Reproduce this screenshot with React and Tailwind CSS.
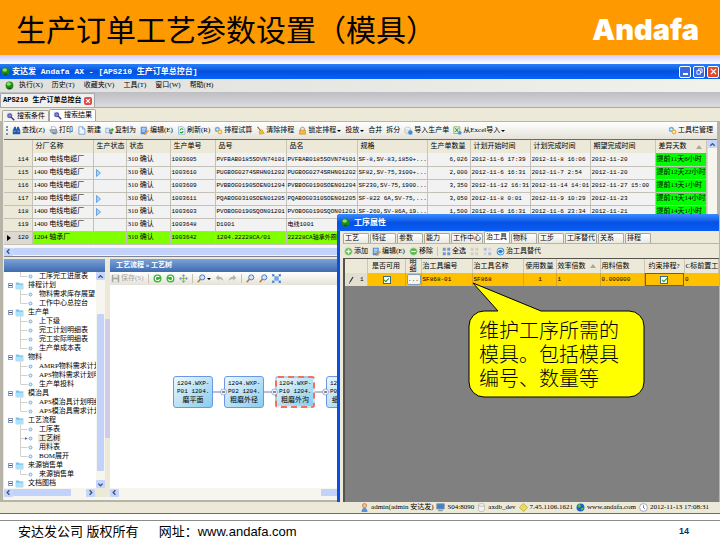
import React, { useState } from "react";

const orders = [
  { no: 114, plant: "1400 电线电缆厂", flag: false, order: "1003605", item: "PVFBAB0185SOVN74101", name: "PVFBAB0185SOVN74101", spec: "SF-8,SV-83,1850+...", qty: "6,026", start: "2012-11-6 17:39", end: "2012-11-8 16:06", expect: "2012-11-20", diff: "提前11天8小时" },
  { no: 115, plant: "1400 电线电缆厂", flag: true, order: "1003610", item: "PUGBOG0274SRHN01202", name: "PUGBOG0274SRHN01202", spec: "SF82,SV-75,3100+...", qty: "2,000", start: "2012-11-6 16:31", end: "2012-11-7 2:54", expect: "2012-11-20", diff: "提前12天22小时" },
  { no: 116, plant: "1400 电线电缆厂", flag: false, order: "1003609", item: "PVBBOG0190SOEN01204", name: "PVBBOG0190SOEN01204", spec: "SF230,SV-75,1900...", qty: "3,350", start: "2012-11-12 16:31", end: "2012-11-14 14:01", expect: "2012-11-27 15:00", diff: "提前13天1小时" },
  { no: 117, plant: "1400 电线电缆厂", flag: true, order: "1003611", item: "PQABOG0310SOEN01205", name: "PQABOG0310SOEN01205", spec: "SF-822 6A,SV-75,...", qty: "3,050", start: "2012-11-8 0:01", end: "2012-11-9 10:29", expect: "2012-11-23", diff: "提前13天14小时" },
  { no: 118, plant: "1400 电线电缆厂", flag: true, order: "1003603", item: "PVOBOG0190SQON01201", name: "PVOBOG0190SQON01201", spec: "SF-260,SV-86A,19...", qty: "1,500", start: "2012-11-6 16:31", end: "2012-11-6 23:34", expect: "2012-11-21", diff: "提前14天1小时" },
  { no: 119, plant: "1400 电线电缆厂", flag: false, order: "1003648", item: "D1001", name: "电线1001" },
  { no: 120, plant: "1204 轴承厂", flag: false, order: "1003642", item: "1204.22228CA/01", name: "22228CA轴承外圈", current: true },
];

const tree = [
  { label: "工序完工进度表", last: true },
  { label: "排程计划", folder: true },
  { label: "物料需求库存展望" },
  { label: "工作中心总控台", last: true },
  { label: "生产单", folder: true },
  { label: "上下级" },
  { label: "完工计划明细表" },
  { label: "完工实际明细表" },
  { label: "生产单成本表", last: true },
  { label: "物料", folder: true },
  { label: "AMRP物料需求计划明" },
  { label: "APS物料需求计划明" },
  { label: "生产单投料", last: true },
  { label: "模治具", folder: true },
  { label: "APS模治具计划明细" },
  { label: "APS模治具需求计划", last: true },
  { label: "工艺流程", folder: true },
  { label: "工序表" },
  { label: "工艺树", selected: true },
  { label: "用料表" },
  { label: "BOM展开", last: true },
  { label: "来源销售单", folder: true },
  { label: "来源销售单", last: true },
  { label: "文档图档", folder: true },
];

const steps = [
  { code: "1204.WXP-", op: "P01 1204.", name: "磨平面" },
  { code: "1204.WXP-", op: "P02 1204.", name: "粗磨外径" },
  { code: "1204.WXP-", op: "P10 1204.", name: "粗磨外沟", active: true },
  { code: "1204.WXP-", op: "P09 1204.", name: "细磨外径" },
];

const iconShapes = {
  ball: (
    <>
      <circle cx="6" cy="6" r="5.2" fill="#1f8a1f" />
      <ellipse cx="5" cy="4" rx="3" ry="2.2" fill="#8be05a" />
      <path d="M3 9h6l-1 2H4z" fill="#0b5a1a" />
    </>
  ),
  find: (
    <>
      <path d="M3 1h2l1 4v6H1V6zM7 1h2l2 5v5H6V5z" fill="#2458a8" />
      <path d="M2 7h3M7 7h3" stroke="#9cc4f4" />
    </>
  ),
  print: (
    <>
      <path d="M3 1h5l2 4H4z" fill="#fff" stroke="#7a8ba5" strokeWidth=".7" />
      <path d="M1 5h9l1 4H3z" fill="#a9b6c8" stroke="#5c6b82" strokeWidth=".7" />
      <path d="M4 9h6v2H5z" fill="#4a90d9" />
    </>
  ),
  page: <path d="M2.500 1h5l3 3v7h-8zM7.500 1v3h3" fill="#eef6ff" stroke="#6a93c9" />,
  copy: (
    <>
      <path d="M1 3h5v6H1z" fill="#dcebfa" stroke="#6a93c9" strokeWidth=".8" />
      <path d="M5 8c0-3 2-4 4-4V2l3 3-3 3V6c-2 0-3 1-4 2z" fill="#2fa52f" />
      <circle cx="8" cy="9" r="2" fill="#8658b8" />
    </>
  ),
  edit: (
    <>
      <path d="M1 1h8v10H1z" fill="#4f8fe0" />
      <path d="M2.500 3h5M2.500 5h5M2.500 7h4" stroke="#fff" />
      <path d="M11 5l-5 5-1 2 2-.5 5-5z" fill="#f49a2a" />
    </>
  ),
  refresh: (
    <>
      <path d="M2 1h6l2.500 2.500V11H2z" fill="#f3fbff" stroke="#6aa0d0" strokeWidth=".8" />
      <path d="M4 6c0-3 4-3 4-1M8 6.500c0 3-4 3-4 1" fill="none" stroke="#22a022" strokeWidth="1.500" />
    </>
  ),
  gears: (
    <>
      <circle cx="4.500" cy="4.500" r="3.500" fill="#6db3ea" />
      <circle cx="4.500" cy="4.500" r="1.300" fill="#fff" />
      <circle cx="8" cy="8" r="3.200" fill="#f0b04a" />
      <circle cx="8" cy="8" r="1.200" fill="#fff" />
    </>
  ),
  broom: (
    <>
      <path d="M2 1l4 5" stroke="#8a5a20" strokeWidth="1.500" />
      <path d="M4 7l4-2 3 5-6 1z" fill="#f6c233" stroke="#b07d12" strokeWidth=".6" />
    </>
  ),
  lock: (
    <>
      <path d="M3.500 6V4a2.500 2.500 0 0 1 5 0v2" fill="none" stroke="#9a9a9a" strokeWidth="1.300" />
      <path d="M2 5.500h8V11H2z" fill="#f7b63c" stroke="#b5791a" strokeWidth=".6" />
    </>
  ),
  disk: (
    <>
      <ellipse cx="5" cy="4" rx="4" ry="2.500" fill="#f4f4f4" stroke="#a0a0a0" strokeWidth=".6" />
      <path d="M1 4v4c0 3 8 3 8 0V4" fill="#dfe3e8" stroke="#a0a0a0" strokeWidth=".6" />
      <circle cx="8.500" cy="8.500" r="3" fill="#3c8fdc" />
    </>
  ),
  excel: (
    <>
      <path d="M1 1h8v9H1z" fill="#dff0d4" stroke="#5b9a4a" strokeWidth=".8" />
      <path d="M3 3l4 5M7 3L3 8" stroke="#2c8a2c" strokeWidth="1.300" />
      <circle cx="9" cy="9" r="2.500" fill="#4b94da" />
    </>
  ),
  search: (
    <>
      <path d="M1 1h7v7H1z" fill="#c9d6ef" />
      <circle cx="5" cy="5" r="2.700" fill="#8d7fe0" stroke="#3b3585" />
      <path d="M7 7l4 4" stroke="#3b3585" strokeWidth="1.800" />
    </>
  ),
  add: (
    <>
      <circle cx="6" cy="6" r="5" fill="#58b548" stroke="#bfe3b4" />
      <path d="M6 3v6M3 6h6" stroke="#fff" strokeWidth="1.700" />
    </>
  ),
  remove: (
    <>
      <circle cx="6" cy="6" r="5" fill="#58b548" stroke="#bfe3b4" />
      <path d="M3 6h6" stroke="#fff" strokeWidth="1.700" />
    </>
  ),
  squares: <path d="M1 1h4v4H1zM7 1h4v4H7zM1 7h4v4H1zM7 7h4v4H7z" fill="#7397cf" />,
  squaresOff: <path d="M1 1h4v4H1zM7 1h4v4H7zM1 7h4v4H1zM7 7h4v4H7z" fill="#d2cfc5" />,
  invert: (
    <>
      <path d="M1 1h4v4H1zM7 7h4v4H7z" fill="#aebddb" />
      <path d="M7 1h4v4H7zM1 7h4v4H1z" fill="#d8d8d2" />
    </>
  ),
  swap: (
    <>
      <circle cx="6" cy="6" r="5" fill="#2b7fd0" />
      <path d="M2 6c1-4 6-4 7-1M10 6c-1 4-6 4-7 1" fill="none" stroke="#d9f0ff" strokeWidth="1.500" />
    </>
  ),
  save: (
    <>
      <path d="M1 1h10v10H1z" fill="#a6a6a0" />
      <path d="M3 1h6v4H3zM3 7h6v4H3z" fill="#e8e8e2" />
    </>
  ),
  turnLeft: (
    <>
      <circle cx="6" cy="6" r="5.300" fill="#36b336" />
      <path d="M8.500 4A3 3 0 1 0 9 7" fill="none" stroke="#fff" strokeWidth="1.500" />
    </>
  ),
  turnRight: (
    <>
      <circle cx="6" cy="6" r="5.300" fill="#36b336" />
      <path d="M3.500 4A3 3 0 1 1 3 7" fill="none" stroke="#fff" strokeWidth="1.500" />
    </>
  ),
  move: (
    <>
      <path d="M6 0l2.500 3h-5zM6 12l2.500-3h-5zM0 6l3-2.500v5zM12 6L9 3.500v5z" fill="#7d97cf" />
      <path d="M6 3v6M3 6h6" stroke="#8fbf3f" strokeWidth="1.500" />
    </>
  ),
  zoomer: (
    <>
      <circle cx="7" cy="4.500" r="3.400" fill="#cfe6fb" stroke="#3d73bd" strokeWidth="1.200" />
      <path d="M4.500 7L1 11" stroke="#c8741c" strokeWidth="2" />
    </>
  ),
  undo: <path d="M1 5l4-4v2.500c4 0 6 2 6 6-1-2-3-3-6-3V9z" fill="#b4b4ae" />,
  redo: <path d="M11 5L7 1v2.500c-4 0-6 2-6 6 1-2 3-3 6-3V9z" fill="#b4b4ae" />,
  fit: (
    <>
      <path d="M3 3h6v6H3z" fill="#6ea6e6" />
      <path d="M0 0l4 1-3 3zM12 0L8 1l3 3zM0 12l4-1-3-3zM12 12l-4-1 3-3z" fill="#2f6cc0" />
    </>
  ),
  user: (
    <>
      <circle cx="6" cy="3.500" r="2.800" fill="#f3c08c" stroke="#a4642c" strokeWidth=".8" />
      <path d="M2 12c0-7 8-7 8 0z" fill="#5a8fdc" />
    </>
  ),
  monitor: (
    <>
      <path d="M1 1h10v7H1z" fill="#3f83cc" stroke="#8d8d8d" />
      <path d="M3 9h6v2H3z" fill="#8d9bb0" />
    </>
  ),
  db: <path d="M2 3c0-3 8-3 8 0v6c0 3-8 3-8 0zM2 3c0 2 8 2 8 0" fill="#f2f2f2" stroke="#a5a5a5" strokeWidth=".8" />,
  tag: <path d="M6 .5L11.500 6 6 11.500.5 6z" fill="#e9dc5a" stroke="#a89a20" strokeWidth=".8" />,
  globe: (
    <>
      <circle cx="6" cy="6" r="5.300" fill="#1d62c0" />
      <path d="M3 2c3-1 4 1 3 3S3 6 2 5zM7 7l3-1c1 2-1 4-3 4z" fill="#4fc04a" />
    </>
  ),
  clock: (
    <>
      <circle cx="6" cy="6" r="5.200" fill="#fff" stroke="#8793a8" />
      <path d="M6 3v3.500l2 1" fill="none" stroke="#4b5f86" />
    </>
  ),
  folder: (
    <>
      <path d="M1 2h4l1 1h5v8H1z" fill="#7cc3ea" />
      <path d="M1 5h10v6H1z" fill="#aee0f7" />
      <path d="M6 1h4v2H6z" fill="#fff" />
    </>
  ),
};

const Icon = ({ name }) => (
  <svg viewBox="0 0 12 12" className="h-[9px] w-[9px] shrink-0" aria-hidden="true">
    {iconShapes[name]}
  </svg>
);

const Caret = () => (
  <svg viewBox="0 0 4 4" className="h-[4px] w-[4px] shrink-0" aria-hidden="true">
    <path d="M0 1h4L2 3z" fill="#000" />
  </svg>
);

const ToolButton = ({ icon, label, caret, muted }) => (
  <button
    aria-label={label || icon}
    className={`flex shrink-0 items-center gap-px whitespace-nowrap ${muted ? "text-[#a5a297]" : ""}`}
  >
    {icon && <Icon name={icon} />}
    {label}
    {caret && <Caret />}
  </button>
);

// Square arrow button at the end of a scroll bar
const ScrollArrow = ({ d }) => (
  <button aria-label="滚动" className="flex h-[8px] w-[9px] shrink-0 items-center justify-center rounded-[1px] bg-[#c6d5fb]">
    <svg viewBox="0 0 8 8" className="h-[7px] w-[7px]">
      <path d={d} fill="none" stroke="#3c5587" strokeWidth="1.600" />
    </svg>
  </button>
);

const arrows = {
  up: "M1.500 5.500L4 3l2.500 2.500",
  down: "M1.500 3L4 5.500 6.500 3",
  left: "M5 1.500L2.500 4 5 6.500",
  right: "M3 1.500L5.500 4 3 6.500",
};

const code = "font-['Liberation_Mono','Noto_Sans_CJK_SC',monospace] text-[6px]";

const GridTick = ({ label }) => (
  <input
    type="checkbox"
    defaultChecked
    aria-label={label}
    className="flex h-[8px] w-[8px] appearance-none items-center justify-center border border-[#3c6a94] bg-white checked:after:mb-px checked:after:block checked:after:h-[5px] checked:after:w-[3px] checked:after:rotate-45 checked:after:border-r checked:after:border-b checked:after:border-[#179a17] checked:after:content-['']"
  />
);

const OrderToolbar = () => (
  <div className="flex h-[18px] shrink-0 items-center gap-[4px] border-t border-[#b8b5a8] bg-gradient-to-b from-white to-[#e4e2d8] pl-[2px] pr-[4px]">
    <span className="h-[9px] border-l-2 border-dotted border-[#7d8fb5]" />
    <ToolButton icon="find" label="查找(Z)" />
    <ToolButton icon="print" label="打印" />
    <ToolButton icon="page" label="新建" />
    <ToolButton icon="copy" label="复制为" />
    <ToolButton icon="edit" label="编辑(E)" />
    <ToolButton icon="refresh" label="刷新(R)" />
    <ToolButton icon="gears" label="排程试算" />
    <ToolButton icon="broom" label="清除排程" />
    <ToolButton icon="lock" label="锁定排程" caret />
    <ToolButton label="投放" caret />
    <ToolButton label="合并" />
    <ToolButton label="拆分" />
    <ToolButton icon="disk" label="导入生产单" />
    <ToolButton icon="excel" label="从Excel导入" caret />
    <div className="ml-auto">
      <ToolButton icon="gears" label="工具栏管理" />
    </div>
  </div>
);

const OrderGrid = () => {
  const th = "border-r border-[#c9c6b6] pl-[3px] text-left font-normal";
  const td = "border-r border-b border-[#c4c2b8] pl-px";

  return (
    <div className="flex h-[117px] shrink-0 flex-col border-t border-[#6e6c66] bg-[#f7f7f3]">
      <div className="flex min-h-0 flex-1">
        <div className="min-w-0 flex-1 overflow-hidden">
          <table className="w-full table-fixed border-collapse whitespace-nowrap">
            <colgroup>
              <col className="w-[28px]" />
              <col className="w-[61px]" />
              <col className="w-[33px]" />
              <col className="w-[44px]" />
              <col className="w-[45px]" />
              <col className="w-[71px]" />
              <col className="w-[71px]" />
              <col className="w-[70px]" />
              <col className="w-[43px]" />
              <col className="w-[60px]" />
              <col className="w-[60px]" />
              <col className="w-[65px]" />
              <col />
            </colgroup>
            <thead>
              <tr className="h-[13px] bg-[#ece9d8]">
                <th className={th} aria-label="行号" />
                <th className={th}>分厂名称</th>
                <th className={th}>生产状态</th>
                <th className={th}>状态</th>
                <th className={th}>生产单号</th>
                <th className={th}>品号</th>
                <th className={th}>品名</th>
                <th className={th}>规格</th>
                <th className={th}>生产单数量</th>
                <th className={th}>计划开始时间</th>
                <th className={th}>计划完成时间</th>
                <th className={th}>期望完成时间</th>
                <th className={th}>
                  <div className="flex items-center justify-between pr-[4px]">
                    差异天数
                    <svg viewBox="0 0 6 4" className="h-[4px] w-[6px]">
                      <path d="M0 4h6L3 0z" fill="#aca899" />
                    </svg>
                  </div>
                </th>
              </tr>
            </thead>
            <tbody>
              {orders.map((row) => (
                <tr key={row.no} className={`h-[13px] ${row.current ? "bg-[#80ff00]" : "bg-[#f2f2f2]"}`}>
                  <td className={`border-r border-b border-[#c4c2b8] pr-[3px] ${row.current ? "bg-[#dcdad0]" : "bg-[#ece9d8]"}`}>
                    <div className={`flex items-center justify-between pl-[3px] ${code}`}>
                      <svg viewBox="0 0 4 6" className="h-[6px] w-[4px]">
                        {row.current && <path d="M0 0l4 3-4 3z" fill="#000" />}
                      </svg>
                      {row.no}
                    </div>
                  </td>
                  <td className={td}>{row.plant}</td>
                  <td className={td}>
                    {row.flag && (
                      <svg viewBox="0 0 5 8" className="ml-px h-[8px] w-[5px]">
                        <path d="M.5.5L4.500 4 .5 7.500z" fill="#a8d4f8" stroke="#4c94dc" strokeWidth=".8" />
                      </svg>
                    )}
                  </td>
                  <td className={td}>310 确认</td>
                  <td className={`${td} ${code}`}>{row.order}</td>
                  <td className={`${td} ${code}`}>{row.item}</td>
                  <td className={`${td} ${code}`}>{row.name}</td>
                  <td className={`${td} ${code}`}>{row.spec}</td>
                  <td className={`${td} ${code} pr-[2px] text-right`}>{row.qty}</td>
                  <td className={`${td} ${code}`}>{row.start}</td>
                  <td className={`${td} ${code}`}>{row.end}</td>
                  <td className={`${td} ${code}`}>{row.expect}</td>
                  <td className={`${td} bg-[#00ff00]`}>{row.diff}</td>
                </tr>
              ))}
            </tbody>
          </table>
        </div>
        <div className="w-[10px] shrink-0 border-l border-[#dcdad0] bg-[#f6f5ee]">
          <ScrollArrow d={arrows.up} />
        </div>
      </div>
      <div className="flex h-[9px] shrink-0 items-center bg-[#f6f5ee]">
        <ScrollArrow d={arrows.left} />
        <div className="h-[7px] flex-1 rounded-[1px] bg-[#c3d2fb]" />
      </div>
    </div>
  );
};

const TreeRow = ({ item }) => {
  if (item.folder) {
    return (
      <li className="flex h-[9px] items-center gap-[2px] pl-[4px]">
        <span className="flex h-[5px] w-[5px] shrink-0 items-center justify-center border border-[#8ba0c0] bg-white">
          <span className="h-px w-[3px] bg-[#44546e]" />
        </span>
        <Icon name="folder" />
        <a href="#folder" className="pl-[2px]">{item.label}</a>
      </li>
    );
  }
  return (
    <li className="flex h-[9px] items-center pl-[16px]">
      <svg viewBox="0 0 18 9" className="h-[9px] w-[18px] shrink-0">
        <path d={item.last ? "M.5 0v4.500h7" : "M.5 0v9M.5 4.500h7"} fill="none" stroke="#d2d2ca" />
        <circle cx="10.500" cy="4.500" r="1.500" fill="#d9eefb" stroke="#5a9ed0" strokeWidth=".8" />
        {item.selected && <path d="M5 3l2.500 1.500L5 6z" fill="#6b5fb5" />}
      </svg>
      <a href="#view" className={`px-px ${item.selected ? "bg-[#ece9d8]" : ""}`}>{item.label}</a>
    </li>
  );
};

const NavTree = () => (
  <aside className="flex w-[101px] shrink-0 flex-col">
    <div className="h-[13px] shrink-0 bg-gradient-to-b from-[#7ba2d8] to-[#3f6cae]" />
    <div className="flex min-h-0 flex-1 bg-white">
      <ul className="min-w-0 flex-1 overflow-hidden whitespace-nowrap">
        {tree.map((item, i) => (
          <TreeRow key={i} item={item} />
        ))}
      </ul>
      <div className="flex w-[9px] shrink-0 flex-col bg-[#f6f5ee]">
        <ScrollArrow d={arrows.up} />
        <div className="h-[34px] shrink-0" />
        <div className="mx-px flex-1 rounded-[1px] bg-[#c3d2fb]" />
        <div className="h-[9px] shrink-0" />
        <ScrollArrow d={arrows.down} />
      </div>
    </div>
    <div className="flex h-[9px] shrink-0 items-center bg-[#f6f5ee]">
      <ScrollArrow d={arrows.left} />
      <div className="h-[7px] w-[58px] rounded-[1px] bg-[#c3d2fb]" />
      <div className="flex-1" />
      <ScrollArrow d={arrows.right} />
      <div className="w-[10px] self-stretch bg-[#ece9d8]" />
    </div>
  </aside>
);

const FlowPanel = () => (
  <section className="flex min-w-0 flex-1 flex-col">
    <h2 className="flex h-[13px] shrink-0 items-center bg-gradient-to-b from-[#7ba2d8] to-[#3f6cae] pl-[6px] font-bold text-white">
      工艺流程 » 工艺树
    </h2>
    <div className="flex h-[13px] shrink-0 items-center gap-[4px] bg-gradient-to-b from-white to-[#e4e2d8] pl-px">
      <ToolButton icon="save" label="保存(S)" muted />
      <span className="h-[9px] border-l border-[#c5c2b4]" />
      <ToolButton icon="turnLeft" />
      <ToolButton icon="turnRight" />
      <ToolButton icon="move" />
      <span className="h-[9px] border-l border-[#c5c2b4]" />
      <ToolButton icon="zoomer" caret />
      <ToolButton icon="undo" />
      <ToolButton icon="redo" />
      <span className="h-[9px] border-l border-[#c5c2b4]" />
      <ToolButton icon="zoomer" />
      <ToolButton icon="zoomer" />
      <ToolButton icon="fit" />
    </div>
    <div className="min-h-0 flex-1 overflow-hidden bg-white">
      <div className="flex items-center pt-[91px] pl-[63px]">
        {steps.map((step, i) => (
          <React.Fragment key={step.op}>
            {i > 0 && (
              <svg viewBox="0 0 14 8" className="z-10 -mr-[3px] h-[8px] w-[14px] shrink-0">
                <path d="M0 4h8" stroke="#7b78b8" />
                <circle cx="10.500" cy="4" r="3" fill="#f4f8ff" stroke="#8a9cd0" strokeWidth=".8" />
                <path d="M9 4h3" stroke="#222" />
              </svg>
            )}
            <div
              className={`h-[32px] w-[40px] shrink-0 rounded-[3px] bg-gradient-to-br from-[#eef7fc] to-[#86cdee] leading-[8px] whitespace-nowrap ${
                step.active ? "border-2 border-dashed border-[#f4705c] px-[2px] pt-[2px]" : "border border-[#6c97e4] px-[3px] pt-[3px]"
              }`}
            >
              <p className={code}>{step.code}</p>
              <p className={code}>{step.op}</p>
              <p className="text-center">{step.name}</p>
            </div>
          </React.Fragment>
        ))}
      </div>
    </div>
    <div className="flex h-[9px] shrink-0 items-center bg-[#f6f5ee]">
      <ScrollArrow d={arrows.left} />
      <div className="w-[202px]" />
      <div className="h-[7px] flex-1 bg-[#c3d2fb]" />
    </div>
  </section>
);

const dialogTabs = ["工艺", "特征", "参数", "能力", "工作中心", "治工具", "物料", "工步", "工序替代", "关系", "排程"];

const OperationDialog = () => {
  const [tab, setTab] = useState("治工具");
  const th = "border-r border-[#c9c6b6] px-px font-normal";
  const td = "border-r border-[#d9a520] pl-px";

  return (
    <div
      role="dialog"
      aria-label="工序属性"
      className="absolute top-[150px] right-px bottom-[11px] left-[337px] flex flex-col rounded-t-[3px] bg-[#0a50e0]"
    >
      <h2 className="flex h-[17px] shrink-0 items-center gap-[4px] rounded-t-[3px] bg-gradient-to-b from-[#3c8cff] via-[#0652e4] to-[#0a5cf4] pl-[4px] text-[8px] font-bold text-white">
        <Icon name="ball" />
        工序属性
      </h2>
      <div className="ml-[3px] flex min-h-0 flex-1 flex-col bg-[#ece9d8] pl-[3px]">
        <div className="flex h-[13px] shrink-0 items-end gap-px border-b border-[#b9b6a6]">
          {dialogTabs.map((name) => (
            <button
              key={name}
              onClick={() => setTab(name)}
              className={`min-w-[26px] shrink-0 rounded-t-[2px] border-x border-t border-[#a5a89c] px-px text-left whitespace-nowrap ${
                tab === name ? "h-[12px] border-t-[#f59a23] bg-white" : "h-[10px] bg-gradient-to-b from-white to-[#ebe9df]"
              }`}
            >
              {name}
            </button>
          ))}
        </div>
        <div className="flex h-[14px] shrink-0 items-center gap-[4px] pl-px">
          <ToolButton icon="add" label="添加" />
          <ToolButton icon="edit" label="编辑(E)" />
          <ToolButton icon="remove" label="移除" />
          <span className="h-[9px] border-l border-[#c5c2b4]" />
          <ToolButton icon="squares" label="全选" />
          <ToolButton icon="squaresOff" />
          <ToolButton icon="invert" />
          <ToolButton icon="swap" label="治工具替代" />
        </div>
        <div className="min-h-0 flex-1 overflow-hidden border-t border-l-2 border-[#55534e] bg-[#808080]">
          <table className="w-full table-fixed border-collapse whitespace-nowrap">
            <colgroup>
              <col className="w-[22px]" />
              <col className="w-[38px]" />
              <col className="w-[16px]" />
              <col className="w-[51px]" />
              <col className="w-[51px]" />
              <col className="w-[33px]" />
              <col className="w-[44px]" />
              <col className="w-[44px]" />
              <col className="w-[40px]" />
              <col />
            </colgroup>
            <thead>
              <tr className="h-[14px] bg-[#ece9d8]">
                <th className={th} aria-label="行号" />
                <th className={th}>是否可用</th>
                <th className={`${th} leading-[7px] whitespace-normal`}>
                  <span className="block px-[3px]">明细</span>
                </th>
                <th className={`${th} text-left`}>治工具编号</th>
                <th className={`${th} text-left`}>治工具名称</th>
                <th className={th}>使用数量</th>
                <th className={th}>
                  <div className="flex items-center justify-between pr-[3px]">
                    效率倍数
                    <svg viewBox="0 0 6 4" className="h-[4px] w-[6px]">
                      <path d="M0 4h6L3 0z" fill="#aca899" />
                    </svg>
                  </div>
                </th>
                <th className={`${th} text-left`}>用料倍数</th>
                <th className={th}>约束排程?</th>
                <th className={`${th} overflow-hidden text-left`}>C标前置工时</th>
              </tr>
            </thead>
            <tbody className={code}>
              <tr className="h-[13px] bg-[#ffc000]">
                <td className="border-r border-[#c9c6b6] bg-[#e2dfd0] px-[3px]">
                  <div className="flex items-center justify-between">
                    <svg viewBox="0 0 6 8" className="h-[8px] w-[6px]">
                      <path d="M5 1L2 6M1 7h1" stroke="#333" strokeWidth="1.200" />
                    </svg>
                    1
                  </div>
                </td>
                <td className={td}>
                  <div className="flex justify-center">
                    <GridTick label="是否可用" />
                  </div>
                </td>
                <td className={td}>
                  <button aria-label="明细" className="block h-[11px] w-[14px] rounded-[2px] border border-[#7f9db9] bg-[#f5f4ee] leading-[6px]">
                    ...
                  </button>
                </td>
                <td className={td}>SF868-01</td>
                <td className={td}>SF868</td>
                <td className={`${td} text-center`}>1</td>
                <td className={td}>1</td>
                <td className={td}>0.000000</td>
                <td className="shadow-[inset_0_0_0_1px_#44619a]">
                  <div className="flex justify-center">
                    <GridTick label="约束排程" />
                  </div>
                </td>
                <td className="pl-px">0</td>
              </tr>
            </tbody>
          </table>
        </div>
      </div>

      {/* Speech bubble that points at the tool name */}
      <div className="absolute top-[68px] left-[131px] w-[177px]">
        <svg viewBox="0 0 177 116" className="block h-[116px] w-[177px]">
          <path
            d="M16 29H30L5 1L73 29H161a15 15 0 0 1 15 15V100a15 15 0 0 1-15 15H16a15 15 0 0 1-15-15V44a15 15 0 0 1 15-15z"
            fill="#ffff00"
            stroke="#000"
          />
        </svg>
        <p className="absolute top-[37px] left-[11px] w-[150px] text-[20px] leading-[24px] font-light">
          维护工序所需的模具。包括模具编号、数量等
        </p>
      </div>
    </div>
  );
};

const StatusItem = ({ icon, children }) => (
  <span className="flex items-center gap-[2px]">
    <Icon name={icon} />
    {children}
  </span>
);

const App = () => {
  const [view, setView] = useState("搜索结果");

  return (
    <div className="flex h-screen flex-col overflow-hidden bg-white font-['Liberation_Serif','Noto_Sans_CJK_SC',serif] text-[7px] leading-[9px] text-black">
      {/* Slide header */}
      <header className="flex h-[55px] shrink-0 items-center justify-between bg-[#ff9900] pr-[21px] pl-[16px]">
        <h1 className="font-['Noto_Sans_CJK_SC',sans-serif] text-[30px] leading-[40px]">生产订单工艺参数设置（模具）</h1>
        <span className="pt-[5px] font-['Inter',sans-serif] text-[29px] leading-[32px] font-black text-white">Andafa</span>
      </header>
      <div className="h-[9px] shrink-0 bg-gradient-to-b from-[#ccccff] to-white" />

      {/* Application window */}
      <main className="relative flex min-h-0 flex-1 flex-col border-b border-[#2a78dc] bg-[#ece9d8]">
        <div className="flex h-[15px] shrink-0 items-center gap-[2px] bg-gradient-to-b from-[#2a80f8] via-[#0450dc] to-[#0564fa] px-px font-['Liberation_Mono','Noto_Sans_CJK_SC',monospace] text-[8px] font-bold text-white">
          <Icon name="ball" />
          <span className="flex-1">安达发 Andafa AX - [APS210 生产订单总控台]</span>
          <button aria-label="最小化" className="flex h-[12px] w-[12px] items-end justify-center rounded-[2px] border border-white bg-[#3a68e0] pb-[2px]">
            <span className="h-[2px] w-[5px] bg-white" />
          </button>
          <button aria-label="还原" className="flex h-[12px] w-[12px] items-center justify-center rounded-[2px] border border-white bg-[#3a68e0]">
            <svg viewBox="0 0 8 8" className="h-[7px] w-[7px]">
              <path d="M3 3V1h4v4H5M1 3h4v4H1z" fill="none" stroke="#fff" />
            </svg>
          </button>
          <button aria-label="关闭" className="flex h-[12px] w-[12px] items-center justify-center rounded-[2px] border border-white bg-[#e0492c]">
            <svg viewBox="0 0 8 8" className="h-[7px] w-[7px]">
              <path d="M1 1l6 6M7 1L1 7" stroke="#fff" strokeWidth="1.500" />
            </svg>
          </button>
        </div>

        <nav className="flex h-[13px] shrink-0 items-center gap-[9px] bg-gradient-to-r from-[#dfdfdc] to-[#f2f2ec] pl-[5px]">
          <div className="flex items-center gap-[5px]">
            <Icon name="ball" />
            <button>执行(X)</button>
          </div>
          <button>历史(T)</button>
          <button>收藏夹(V)</button>
          <button>工具(T)</button>
          <button>窗口(W)</button>
          <button>帮助(H)</button>
        </nav>

        <div className="flex h-[16px] shrink-0 items-end border-b border-[#a9a9ae] bg-gradient-to-b from-[#bdbdc3] to-[#dcdce0]">
          <div className="flex h-[14px] items-center gap-[3px] rounded-t-[2px] border-x border-t border-[#a4a4aa] bg-[#f0f0ee] px-[2px] font-['Liberation_Mono','Noto_Sans_CJK_SC',monospace] font-bold">
            APS210 生产订单总控台
            <button aria-label="关闭标签" className="flex h-[8px] w-[8px] items-center justify-center rounded-[2px] bg-[#dd4a4a]">
              <svg viewBox="0 0 8 8" className="h-[6px] w-[6px]">
                <path d="M1.500 1.500l5 5M6.500 1.500l-5 5" stroke="#fff" strokeWidth="1.600" />
              </svg>
            </button>
          </div>
        </div>

        <div className="flex h-[13px] shrink-0 items-end pl-[2px]">
          {["搜索条件", "搜索结果"].map((name) => (
            <button
              key={name}
              onClick={() => setView(name)}
              className={`flex items-center gap-[2px] rounded-t-[2px] border-x border-t border-[#a5a89c] px-[3px] ${
                view === name ? "h-[12px] border-t-[#f59a23] bg-white" : "h-[11px] bg-[#f4f3ec]"
              }`}
            >
              <Icon name="search" />
              {name}
            </button>
          ))}
        </div>

        <div className="flex min-h-0 flex-1 flex-col border-x-[3px] border-b-2 border-[#b6b4a9] pl-px">
          <OrderToolbar />
          <OrderGrid />
          <div className="h-[3px] shrink-0 border-t border-[#7d8290] bg-[#ece9d8]" />
          <div className="flex min-h-0 flex-1">
            <NavTree />
            <div className="flex w-[5px] shrink-0 flex-col justify-center">
              <div className="h-1/2 bg-[#cfcbea]" />
            </div>
            <FlowPanel />
          </div>
          <div className="h-[3px] shrink-0 bg-[#f6f5ee]" />
        </div>

        <footer className="flex h-[11px] shrink-0 items-center justify-end gap-[3px] pr-[11px]">
          <StatusItem icon="user">admin(admin 安达发)</StatusItem>
          <StatusItem icon="monitor">S04:8090</StatusItem>
          <StatusItem icon="db">axdb_dev</StatusItem>
          <StatusItem icon="tag">7.45.1106.1621</StatusItem>
          <StatusItem icon="globe">
            <a href="#site">www.andafa.com</a>
          </StatusItem>
          <StatusItem icon="clock">2012-11-13 17:08:31</StatusItem>
        </footer>

        <OperationDialog />
      </main>

      {/* Slide footer */}
      <footer className="shrink-0 pt-[6px]">
        <div className="flex h-[20px] items-center justify-between border-t border-[#8c8c8c] pr-[31px] pl-[18px] font-['Liberation_Sans','Noto_Sans_CJK_SC',sans-serif]">
          <p className="flex gap-[20px] pt-[3px] text-[13px] leading-[16px]">
            <span>安达发公司 版权所有</span>
            <span>
              网址：<a href="#site">www.andafa.com</a>
            </span>
          </p>
          <span className="text-[9px] leading-[12px] font-bold text-[#003366]">14</span>
        </div>
      </footer>
    </div>
  );
};

export default App;
